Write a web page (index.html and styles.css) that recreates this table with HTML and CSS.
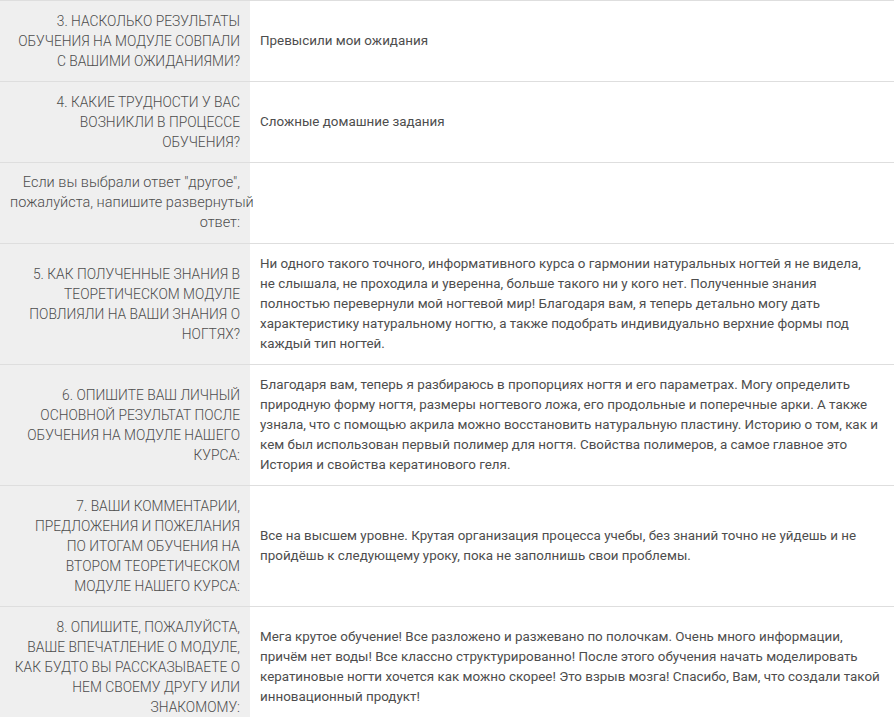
FILE: index.html
```html
<!DOCTYPE html>
<html lang="ru">
<head>
    <meta charset="UTF-8">
    <meta name="viewport" content="width=device-width, initial-scale=1.0">
    <title>Анкета</title>
    <link rel="stylesheet" href="styles.css">
</head>
<body>
<table class="answers">
  <tr>
    <th>3. Насколько результаты<br>обучения на модуле совпали<br>с вашими ожиданиями?</th>
    <td>Превысили мои ожидания</td>
  </tr>
  <tr>
    <th>4. Какие трудности у вас<br>возникли в процессе<br>обучения?</th>
    <td>Сложные домашние задания</td>
  </tr>
  <tr>
    <th class="note">Если вы выбрали ответ "другое",<br>пожалуйста, напишите развернутый<br>ответ:</th>
    <td></td>
  </tr>
  <tr>
    <th>5. Как полученные знания в<br>теоретическом модуле<br>повлияли на ваши знания о<br>ногтях?</th>
    <td>Ни одного такого точного, информативного курса о гармонии натуральных ногтей я не видела,<br>не слышала, не проходила и уверенна, больше такого ни у кого нет. Полученные знания<br>полностью перевернули мой ногтевой мир! Благодаря вам, я теперь детально могу дать<br>характеристику натуральному ногтю, а также подобрать индивидуально верхние формы под<br>каждый тип ногтей.</td>
  </tr>
  <tr>
    <th>6. Опишите ваш личный<br>основной результат после<br>обучения на модуле нашего<br>курса:</th>
    <td>Благодаря вам, теперь я разбираюсь в пропорциях ногтя и его параметрах. Могу определить<br>природную форму ногтя, размеры ногтевого ложа, его продольные и поперечные арки. А также<br>узнала, что с помощью акрила можно восстановить натуральную пластину. Историю о том, как и<br>кем был использован первый полимер для ногтя. Свойства полимеров, а самое главное это<br>История и свойства кератинового геля.</td>
  </tr>
  <tr>
    <th>7. Ваши комментарии,<br>предложения и пожелания<br>по итогам обучения на<br>втором теоретическом<br>модуле нашего курса:</th>
    <td>Все на высшем уровне. Крутая организация процесса учебы, без знаний точно не уйдешь и не<br>пройдёшь к следующему уроку, пока не заполнишь свои проблемы.</td>
  </tr>
  <tr>
    <th>8. Опишите, пожалуйста,<br>ваше впечатление о модуле,<br>как будто вы рассказываете о<br>нем своему другу или<br>знакомому:</th>
    <td>Мега крутое обучение! Все разложено и разжевано по полочкам. Очень много информации,<br>причём нет воды! Все классно структурированно! После этого обучения начать моделировать<br>кератиновые ногти хочется как можно скорее! Это взрыв мозга! Спасибо, Вам, что создали такой<br>инновационный продукт!</td>
  </tr>
</table>
</body>
</html>
```

FILE: styles.css
```css
body {
  font-family: Roboto, "Liberation Sans", sans-serif;
  background-color: #fff;
  color: #4d4d4d;
  margin: 0;
  padding: 0;
}

.answers {
  width: 894px;
  table-layout: fixed;
  border-collapse: collapse;
  font-size: 13.4px;
  line-height: 20px;
}

.answers tr {
  border-top: 1px solid #dedede;
}

.answers th,
.answers td {
  padding: 10px;
  vertical-align: middle;
  white-space: nowrap;
}

.answers th {
  width: 230px;
  background-color: #efefef;
  font-size: 13.8px;
  font-weight: 300;
  text-align: right;
  text-transform: uppercase;
}

.answers th.note {
  font-size: 14.5px;
  text-transform: none;
}

.answers td {
  padding-right: 0;
  text-align: left;
}
```
